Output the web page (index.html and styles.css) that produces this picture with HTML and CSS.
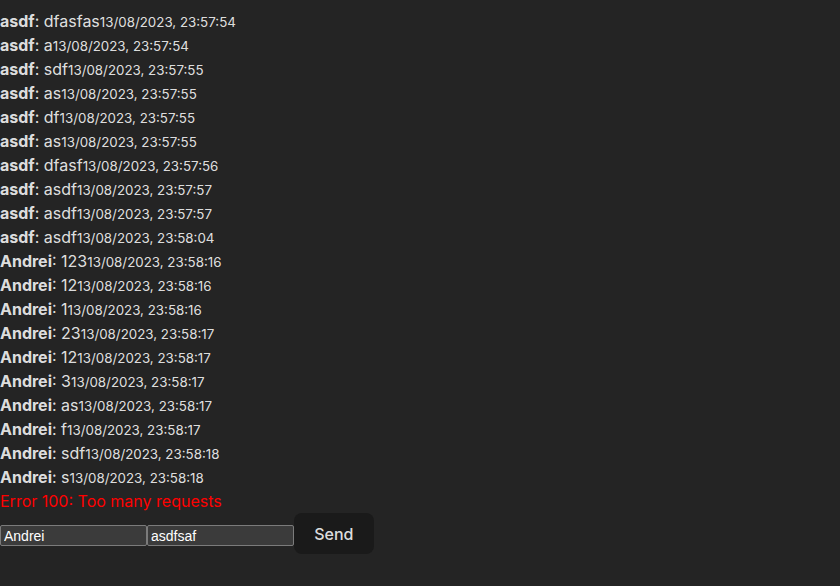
FILE: index.html
```html
<!DOCTYPE html>
<html lang="en">
<head>
<meta charset="utf-8">
<title>Chat</title>
<link rel="stylesheet" href="styles.css">
</head>
<body>
<div class="chat">
  <div class="messages">
    <div class="msg"><b>asdf</b>: dfasfas<small>13/08/2023, 23:57:54</small></div>
    <div class="msg"><b>asdf</b>: a<small>13/08/2023, 23:57:54</small></div>
    <div class="msg"><b>asdf</b>: sdf<small>13/08/2023, 23:57:55</small></div>
    <div class="msg"><b>asdf</b>: as<small>13/08/2023, 23:57:55</small></div>
    <div class="msg"><b>asdf</b>: df<small>13/08/2023, 23:57:55</small></div>
    <div class="msg"><b>asdf</b>: as<small>13/08/2023, 23:57:55</small></div>
    <div class="msg"><b>asdf</b>: dfasf<small>13/08/2023, 23:57:56</small></div>
    <div class="msg"><b>asdf</b>: asdf<small>13/08/2023, 23:57:57</small></div>
    <div class="msg"><b>asdf</b>: asdf<small>13/08/2023, 23:57:57</small></div>
    <div class="msg"><b>asdf</b>: asdf<small>13/08/2023, 23:58:04</small></div>
    <div class="msg"><b>Andrei</b>: 123<small>13/08/2023, 23:58:16</small></div>
    <div class="msg"><b>Andrei</b>: 12<small>13/08/2023, 23:58:16</small></div>
    <div class="msg"><b>Andrei</b>: 1<small>13/08/2023, 23:58:16</small></div>
    <div class="msg"><b>Andrei</b>: 23<small>13/08/2023, 23:58:17</small></div>
    <div class="msg"><b>Andrei</b>: 12<small>13/08/2023, 23:58:17</small></div>
    <div class="msg"><b>Andrei</b>: 3<small>13/08/2023, 23:58:17</small></div>
    <div class="msg"><b>Andrei</b>: as<small>13/08/2023, 23:58:17</small></div>
    <div class="msg"><b>Andrei</b>: f<small>13/08/2023, 23:58:17</small></div>
    <div class="msg"><b>Andrei</b>: sdf<small>13/08/2023, 23:58:18</small></div>
    <div class="msg"><b>Andrei</b>: s<small>13/08/2023, 23:58:18</small></div>
  </div>
  <div class="error">Error 100: Too many requests</div>
  <form class="composer">
    <input class="field" type="text" value="Andrei"><input class="field" type="text" value="asdfsaf"><button class="send" type="button">Send</button>
  </form>
</div>
</body>
</html>
```

FILE: styles.css
```css
:root {
  color-scheme: dark;
}
html, body {
  margin: 0;
  padding: 0;
  background: #242424;
}
body {
  font-family: Inter, "Noto Sans", sans-serif;
  font-size: 16px;
  line-height: 1.5;
  color: rgba(255, 255, 255, 0.87);
}
.chat {
  padding-top: 9px;
}
.msg b {
  font-weight: 700;
}
.msg small {
  font-size: 13.33px;
}
.error {
  color: #ff0000;
}
.composer {
  margin: 0;
  display: flex;
  align-items: center;
}
.field {
  width: 147px;
  box-sizing: border-box;
  height: 21px;
  margin: 4px 0 0 0;
  padding: 1px 3px;
  font-family: "Liberation Sans", Arial, sans-serif;
  font-size: 14px;
  color: #fff;
  background: #3b3b3b;
  border: 1px solid #7b7b7b;
  border-radius: 2px;
}
.send {
  font-family: Inter, "Noto Sans", sans-serif;
  font-size: 16px;
  font-weight: 500;
  line-height: normal;
  padding: 0.6em 1.2em;
  margin: 0;
  border-radius: 8px;
  border: 1px solid transparent;
  background: #1a1a1a;
  color: rgba(255, 255, 255, 0.87);
  cursor: pointer;
}
```
